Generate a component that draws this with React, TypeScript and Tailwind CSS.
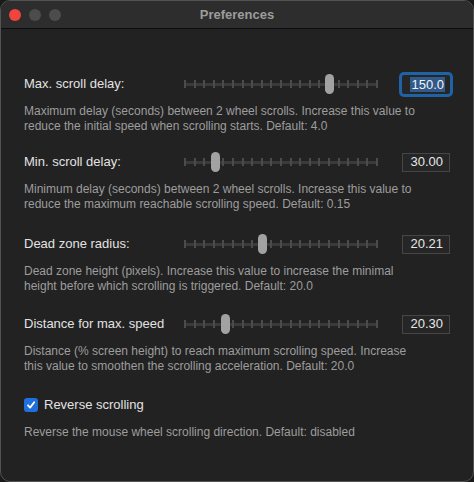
import React from 'react';

interface SettingRow {
  label: string;
  value: string;
  thumb: number;
  focused?: boolean;
  desc: string[];
  gap: string;
}

const ROWS: SettingRow[] = [
  {
    label: 'Max. scroll delay:',
    value: '150.0',
    thumb: 145,
    focused: true,
    desc: [
      'Maximum delay (seconds) between 2 wheel scrolls. Increase this value to',
      'reduce the initial speed when scrolling starts. Default: 4.0',
    ],
    gap: 'pt-0',
  },
  {
    label: 'Min. scroll delay:',
    value: '30.00',
    thumb: 31,
    desc: [
      'Minimum delay (seconds) between 2 wheel scrolls. Increase this value to',
      'reduce the maximum reachable scrolling speed. Default: 0.15',
    ],
    gap: 'pt-[16px]',
  },
  {
    label: 'Dead zone radius:',
    value: '20.21',
    thumb: 78,
    desc: [
      'Dead zone height (pixels). Increase this value to increase the minimal',
      'height before which scrolling is triggered. Default: 20.0',
    ],
    gap: 'pt-[20px]',
  },
  {
    label: 'Distance for max. speed',
    value: '20.30',
    thumb: 41,
    desc: [
      'Distance (% screen height) to reach maximum scrolling speed. Increase',
      'this value to smoothen the scrolling acceleration. Default: 20.0',
    ],
    gap: 'pt-[18px]',
  },
];

function Slider({ thumb }: { thumb: number }) {
  return (
    <div className="relative w-[194px] h-[24px] flex items-center">
      {/* track */}
      <div className="absolute left-0 right-0 top-[11px] h-[3px] bg-[#3a3a3a] rounded-full" />
      <div className="relative w-full flex justify-between items-center">
        {Array.from({ length: 21 }).map((_, i) => (
          <div key={i} className="w-[2px] h-[8px] bg-[#4b4b4b]" />
        ))}
      </div>
      <div
        className="absolute top-[2px] w-[9px] h-[20px] rounded-full bg-[#a2a2a2]"
        style={{ left: thumb - 4 }}
      />
    </div>
  );
}

function NumberField({ value, focused }: { value: string; focused?: boolean }) {
  if (focused) {
    return (
      <div className="ml-auto w-[48px] h-[19px] rounded-[2px] bg-[#262626] ring-[3px] ring-[#1d63a6] flex items-center justify-end pr-[5px]">
        <span className="bg-[#31598a] text-[#f2f2f2] text-[13px] leading-[15px] px-[1px]">{value}</span>
      </div>
    );
  }
  return (
    <div className="ml-auto w-[48px] h-[19px] border border-[#464646] bg-[#262626] flex items-center justify-end pr-[6px] text-[13px] text-[#e6e6e6]">
      {value}
    </div>
  );
}

export default function App() {
  return (
    <div
      className="w-[474px] h-[482px] bg-[#1a1a1a]"
      style={{ fontFamily: '"Liberation Sans", Arial, sans-serif' }}
    >
      <div className="w-full h-full rounded-[10px] border border-[#525252] bg-[#222222] overflow-hidden flex flex-col">
        {/* Title bar */}
        <div className="relative h-[28px] bg-[#2d2d2d] border-b border-[#0c0c0c] flex items-center">
          <div className="flex items-center gap-[8px] pl-[8px]">
            <div className="w-[12px] h-[12px] rounded-full bg-[#f0443f]" />
            <div className="w-[12px] h-[12px] rounded-full bg-[#4c4c4c]" />
            <div className="w-[12px] h-[12px] rounded-full bg-[#4c4c4c]" />
          </div>
          <div className="absolute inset-0 flex items-center justify-center text-[13px] font-bold text-[#9c9c9c]">
            Preferences
          </div>
        </div>

        {/* Content */}
        <div className="px-[23px] pt-[43px] flex flex-col">
          {ROWS.map((row) => (
            <div key={row.label} className={row.gap}>
              <div className="flex items-center h-[24px]">
                <div className="w-[160px] text-[13px] text-[#e2e2e2]">{row.label}</div>
                <Slider thumb={row.thumb} />
                <NumberField value={row.value} focused={row.focused} />
              </div>
              <div className="mt-[8px] text-[12px] leading-[15px] text-[#9d9d9d]">
                {row.desc.map((line) => (
                  <div key={line}>{line}</div>
                ))}
              </div>
            </div>
          ))}

          {/* Reverse scrolling */}
          <div className="pt-[19px]">
            <label className="flex items-center h-[24px] gap-[6px]">
              <span className="w-[14px] h-[14px] rounded-[3px] bg-[#1f6fdc] flex items-center justify-center">
                <svg width="10" height="10" viewBox="0 0 10 10" fill="none">
                  <path d="M2 5.3 L4.1 7.6 L8.2 2.2" stroke="#ffffff" strokeWidth="1.8" strokeLinecap="round" strokeLinejoin="round" />
                </svg>
              </span>
              <span className="text-[13px] text-[#e2e2e2]">Reverse scrolling</span>
            </label>
            <div className="mt-[8px] text-[12px] leading-[15px] text-[#9d9d9d]">
              Reverse the mouse wheel scrolling direction. Default: disabled
            </div>
          </div>
        </div>
      </div>
    </div>
  );
}
